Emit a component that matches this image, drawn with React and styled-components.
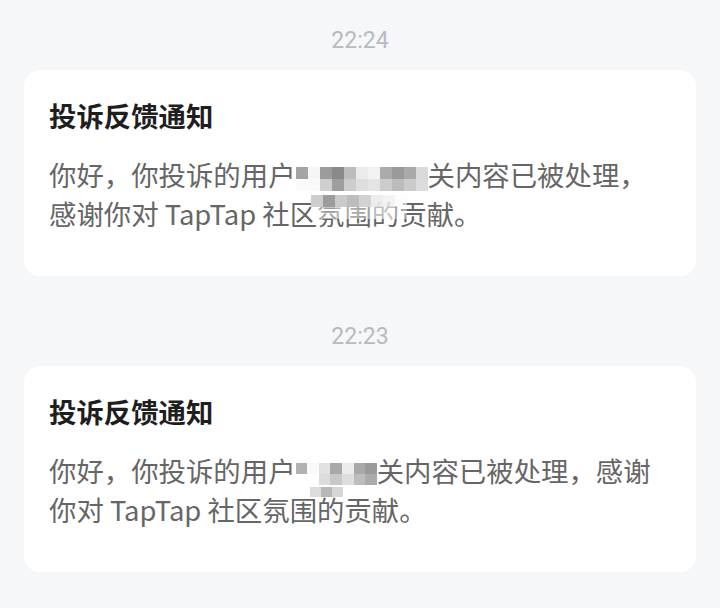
import React from 'react'
import styled, { createGlobalStyle } from 'styled-components'

const Global = createGlobalStyle`
  html, body {
    margin: 0;
    padding: 0;
    background: #f6f7f9;
  }
  body {
    font-family: "Noto Sans CJK SC", "Noto Sans", sans-serif;
    -webkit-font-smoothing: antialiased;
  }
`

const Page = styled.div`
  display: flex;
  flex-direction: column;
  gap: 20px;
  padding: 0 24px;
  width: 720px;
  height: 608px;
  box-sizing: border-box;
  overflow: hidden;
`

const Section = styled.section`
  display: flex;
  flex-direction: column;
`

const Time = styled.div`
  padding-top: 28px;
  margin-bottom: 16px;
  line-height: 26px;
  text-align: center;
  font-family: Roboto, "Noto Sans", sans-serif;
  font-size: 23px;
  color: #b6bac1;
`

const Card = styled.div`
  background: #fff;
  border-radius: 16px;
  padding: 27px 25px 43px;
  height: 206px;
  box-sizing: border-box;
`

const Title = styled.h3`
  margin: 0 0 22px;
  font-size: 27.4px;
  line-height: 36px;
  font-weight: 700;
  color: #1e1e1e;
`

const Body = styled.p`
  margin: 0;
  font-size: 27.4px;
  line-height: 39px;
  color: #666666;
  white-space: nowrap;
`

const Mosaic = styled.span`
  display: inline-grid;
  grid-template-columns: repeat(${p => p.$cols}, ${p => p.$w}px);
  grid-template-rows: repeat(${p => p.$rows}, ${p => p.$h}px);
  grid-auto-flow: column;
  vertical-align: ${p => p.$shift || 0}px;
`

const Cell = styled.span`
  background: ${p => p.$c};
`

const Covered = styled.span`
  position: relative;
`

const Overlay = styled.span`
  position: absolute;
  left: ${p => p.$left}px;
  top: ${p => p.$top}px;
  display: grid;
  grid-template-columns: repeat(${p => p.$cols}, ${p => p.$w}px);
  grid-template-rows: repeat(${p => p.$rows}, ${p => p.$h}px);
  grid-auto-flow: column;
  pointer-events: none;
`

const Pixels = ({ cells, w, h, shift }) => (
  <Mosaic $cols={cells.length / 2} $rows={2} $w={w} $h={h} $shift={shift}>
    {cells.map((c, i) => (
      <Cell key={i} $c={c} />
    ))}
  </Mosaic>
)

const PixelOverlay = ({ cells, w, h, left, top, rows = 2 }) => (
  <Overlay $cols={cells.length / rows} $rows={rows} $w={w} $h={h} $left={left} $top={top}>
    {cells.map((c, i) => (
      <Cell key={i} $c={c} />
    ))}
  </Overlay>
)

// column-major: [top, bottom] pairs
const nameA = [
  '#a4a4a4', '#fbfbfb',
  '#f6f6f6', '#fafafa',
  '#9c9c9c', '#cfcfcf',
  '#8a8a8a', '#9e9e9e',
  '#bdbdbd', '#cdcdcd',
  '#ebebeb', '#dedede',
  '#f3f3f3', '#e4e4e4',
  '#ababab', '#cccccc',
  '#9a9a9a', '#bcbcbc',
  '#a9a9a9', '#cbcbcb',
  '#dadada', '#dcdcdc',
]

const fogA = [
  '#cdcdcd', 'rgba(255,255,255,0.45)',
  '#9c9c9c', 'rgba(255,255,255,0.35)',
  '#cacaca', 'rgba(255,255,255,0.5)',
  '#bdbdbd', 'rgba(255,255,255,0.45)',
  '#d2d2d2', 'rgba(255,255,255,0.4)',
  'rgba(235,235,235,0.9)', 'rgba(255,255,255,0.55)',
  'rgba(240,240,240,0.8)', 'rgba(255,255,255,0.6)',
  'rgba(250,250,250,0.6)', 'rgba(255,255,255,0.4)',
]

const nameB = [
  '#b2b2b2', '#ffffff',
  '#fafafa', '#ffffff',
  '#e2e2e2', '#dcdcdc',
  '#a8a8a8', '#c8c8c8',
  '#ececec', '#dedede',
  '#a9a9a9', '#bdbdbd',
  '#9a9a9a', '#ababab',
]

const fogB = [
  '#dcdcdc',
  '#b8b8b8',
  '#d6d6d6',
]

const App = () => (
  <>
    <Global />
    <Page>
      <Section>
        <Time>22:24</Time>
        <Card>
          <Title>投诉反馈通知</Title>
          <Body>
            你好，你投诉的用户<Pixels cells={nameA} w={12} h={12} shift={7} />关内容已被处理，
            <br />
            感谢你对 TapTap 社区
            <Covered>
              氛围的
              <PixelOverlay cells={fogA} w={12} h={12} left={-6} top={2} />
            </Covered>
            贡献。
          </Body>
        </Card>
      </Section>

      <Section>
        <Time>22:23</Time>
        <Card>
          <Title>投诉反馈通知</Title>
          <Body>
            你好，你投诉的用户<Pixels cells={nameB} w={11.6} h={11} shift={8} />关内容已被处理，感谢
            <br />
            你对 TapTap 社区氛
            <Covered>
              围的
              <PixelOverlay cells={fogB} w={11} h={10} left={20} top={-2} rows={1} />
            </Covered>
            贡献。
          </Body>
        </Card>
      </Section>
    </Page>
  </>
)

export default App
